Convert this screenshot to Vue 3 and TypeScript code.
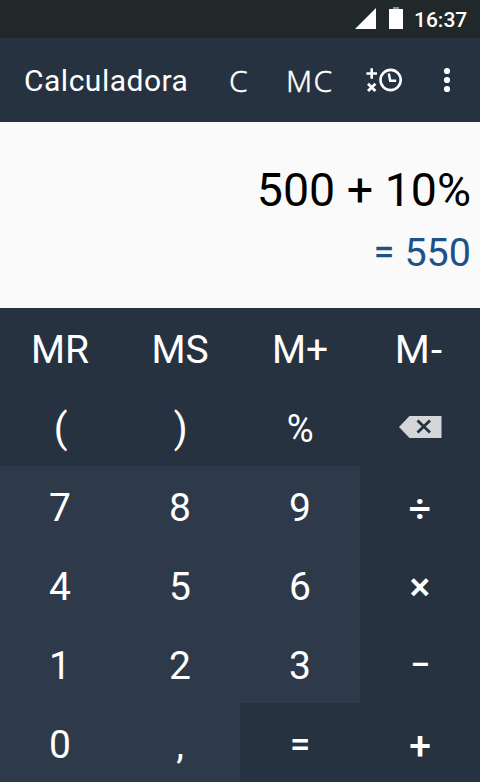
<script setup lang="ts">
interface Key {
  label: string
  tone: 'dark' | 'light'
  kind?: string
}

const keys: Key[] = [
  { label: 'MR', tone: 'dark', kind: 'memory' },
  { label: 'MS', tone: 'dark', kind: 'memory' },
  { label: 'M+', tone: 'dark', kind: 'memory' },
  { label: 'M-', tone: 'dark', kind: 'memory-minus' },
  { label: '(', tone: 'dark', kind: 'paren' },
  { label: ')', tone: 'dark', kind: 'paren' },
  { label: '%', tone: 'dark', kind: 'percent' },
  { label: '', tone: 'dark', kind: 'delete' },
  { label: '7', tone: 'light' },
  { label: '8', tone: 'light' },
  { label: '9', tone: 'light' },
  { label: '÷', tone: 'dark', kind: 'divide' },
  { label: '4', tone: 'light' },
  { label: '5', tone: 'light' },
  { label: '6', tone: 'light' },
  { label: '×', tone: 'dark', kind: 'operator' },
  { label: '1', tone: 'light' },
  { label: '2', tone: 'light' },
  { label: '3', tone: 'light' },
  { label: '−', tone: 'dark', kind: 'minus' },
  { label: '0', tone: 'light' },
  { label: ',', tone: 'light' },
  { label: '=', tone: 'dark', kind: 'equals' },
  { label: '+', tone: 'dark', kind: 'plus' },
]
</script>

<template>
  <main class="screen">
    <div class="status">
      <svg class="signal" width="21" height="21" viewBox="0 0 21 21"><path d="M21 0V21H0Z" /></svg>
      <svg class="battery" width="14" height="22" viewBox="0 0 14 22">
        <path class="cap" d="M4 0h6v3H4z" />
        <path d="M0 2h14v20H0z" />
      </svg>
      <span class="time">16:37</span>
    </div>
    <header class="bar">
      <h1 class="title">Calculadora</h1>
      <button class="action clear">C</button>
      <button class="action memory-clear">MC</button>
      <button class="history">
        <svg width="38" height="26" viewBox="0 0 38 26" fill="none" stroke="#fff">
          <path d="M0.4 6.5H11M5.7 1.2V11.8" stroke-width="2.6" />
          <path d="M2 16.7L9.4 24.1M9.4 16.7L2 24.1" stroke-width="2.8" />
          <circle cx="24.6" cy="13" r="10.1" stroke-width="2.6" />
          <path d="M22.8 6.5L24.2 13.8H30.2" stroke-width="2.4" />
        </svg>
      </button>
      <button class="more">
        <svg width="8" height="26" viewBox="0 0 8 26" fill="#fff">
          <circle cx="4" cy="4" r="3.1" />
          <circle cx="4" cy="13" r="3.1" />
          <circle cx="4" cy="22" r="3.1" />
        </svg>
      </button>
    </header>
    <section class="display">
      <div class="expression">500 + 10%</div>
      <div class="result"><span class="sign">=</span> 550</div>
    </section>
    <section class="pad">
      <button v-for="(key, i) in keys" :key="i" class="key" :class="[key.tone, key.kind]">
        <svg v-if="key.kind === 'delete'" width="43" height="22" viewBox="0 0 43 22">
          <path d="M10.5 0H42.5V22H10.5L0 11Z" fill="#d4d6d9" />
          <path d="M18.5 4.6L31 16.6M31 4.6L18.5 16.6" stroke="#26323f" stroke-width="2.8" />
        </svg>
        <span v-else class="label">{{ key.label }}</span>
      </button>
    </section>
  </main>
</template>

<style>
body {
  margin: 0;
}
</style>

<style scoped>
.screen {
  width: 480px;
  height: 782px;
  overflow: hidden;
  display: flex;
  flex-direction: column;
  font-family: Roboto, sans-serif;
  color: #fff;
  background: #26323f;
}
button {
  border: 0;
  padding: 0;
  margin: 0;
  background: none;
  color: inherit;
  font: inherit;
}
svg {
  display: block;
}
.status {
  height: 38px;
  display: flex;
  align-items: flex-start;
  background: #202829;
  fill: #fff;
}
.signal {
  margin: 8px 0 0 355px;
}
.battery {
  margin: 7px 0 0 13px;
}
.cap {
  fill: #8b8f90;
}
.time {
  margin: 6px 0 0 11px;
  font-size: 21px;
  line-height: 28px;
  font-weight: 500;
}
.bar {
  height: 84px;
  display: flex;
  align-items: center;
  background: #26323f;
}
.title {
  margin: 0 0 0 24px;
  width: 205px;
  font-size: 30px;
  font-weight: 400;
  letter-spacing: 0.5px;
}
.bar .action {
  font-family: "Noto Sans", sans-serif;
  font-size: 30px;
  font-weight: 300;
  -webkit-text-stroke: 0.4px #fff;
  letter-spacing: 1.4px;
  line-height: 40px;
  padding-top: 1px;
}
.clear {
  width: 57px;
  text-align: left;
}
.memory-clear {
  width: 80px;
  text-align: left;
}
.history {
  width: 77px;
}
.display {
  height: 186px;
  box-sizing: border-box;
  padding: 40px 9px 0 0;
  background: #fafafa;
  text-align: right;
}
.expression {
  font-size: 46.5px;
  line-height: 57px;
  color: #000;
}
.result {
  margin-top: 10px;
  font-size: 39.5px;
  line-height: 48px;
  color: #20508a;
}
.sign {
  display: inline-block;
  transform: translateY(-1px) scale(0.94);
  -webkit-text-stroke: 0.4px #20508a;
}
.pad {
  display: grid;
  grid-template-columns: repeat(4, 120px);
  grid-template-rows: repeat(6, 79px);
}
.key {
  display: flex;
  align-items: center;
  justify-content: center;
  padding-top: 4px;
  font-size: 39px;
}
.light {
  background: #2e3a49;
}
.dark {
  background: #26323f;
}
.operator,
.divide,
.minus,
.plus,
.equals {
  font-weight: 500;
}
.divide .label,
.plus .label {
  transform: translateY(0.5px);
}
.minus,
.equals {
  font-size: 36px;
}
.minus .label,
.equals .label {
  transform: translateY(-1px);
}
.memory-minus {
  letter-spacing: 1.2px;
}
.memory-minus .label {
  transform: translateX(-0.5px) scaleX(1.03);
}
.paren {
  font-size: 40px;
}
.paren .label {
  transform: translateX(0.6px);
}
.percent .label {
  transform: scaleX(0.94);
}
.delete {
  padding-top: 1px;
}
</style>
